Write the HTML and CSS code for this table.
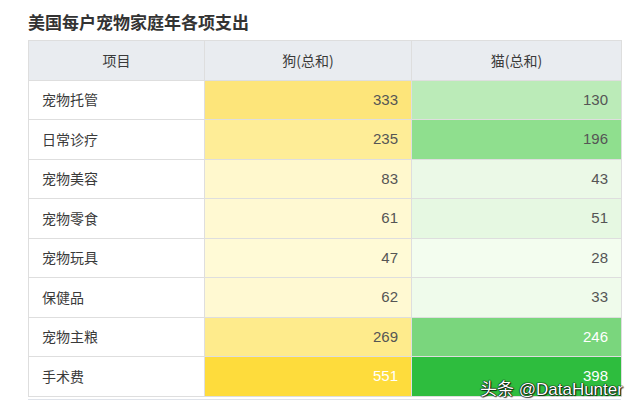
FILE: index.html
```html
<!DOCTYPE html>
<html lang="zh">
<head>
<meta charset="utf-8">
<link rel="stylesheet" href="styles.css">
</head>
<body>
<div class="page">
  <h1 class="title">美国每户宠物家庭年各项支出</h1>
  <div class="table-wrap">
    <table class="grid">
      <thead>
        <tr><th class="c1">项目</th><th class="c2">狗(总和)</th><th class="c3">猫(总和)</th></tr>
      </thead>
      <tbody>
        <tr><td class="name">宠物托管</td><td class="num" style="background:#fde57a">333</td><td class="num" style="background:#bbebb8">130</td></tr>
        <tr><td class="name">日常诊疗</td><td class="num" style="background:#feed97">235</td><td class="num" style="background:#8fdf8e">196</td></tr>
        <tr><td class="name">宠物美容</td><td class="num" style="background:#fff8cd">83</td><td class="num" style="background:#ebf9e7">43</td></tr>
        <tr><td class="name">宠物零食</td><td class="num" style="background:#fff9d2">61</td><td class="num" style="background:#e6f8e2">51</td></tr>
        <tr><td class="name">宠物玩具</td><td class="num" style="background:#fffad6">47</td><td class="num" style="background:#f3fdef">28</td></tr>
        <tr><td class="name">保健品</td><td class="num" style="background:#fff9d2">62</td><td class="num" style="background:#effbeb">33</td></tr>
        <tr><td class="name">宠物主粮</td><td class="num" style="background:#feeb8c">269</td><td class="num light" style="background:#7ad67d">246</td></tr>
        <tr><td class="name">手术费</td><td class="num light" style="background:#fedc3c">551</td><td class="num light" style="background:#2ebd3e">398</td></tr>
      </tbody>
    </table>
  </div>
  <div class="watermark">头条 @DataHunter</div>
</div>
</body>
</html>
```
FILE: styles.css
```css
html, body {
  margin: 0;
  padding: 0;
  background: #ffffff;
}
.page {
  position: relative;
  width: 640px;
  height: 411px;
  overflow: hidden;
  padding-left: 28px;
  box-sizing: border-box;
  font-family: "Liberation Sans", "Noto Sans CJK SC", sans-serif;
}
.title {
  margin: 0;
  padding-top: 12px;
  height: 28px;
  line-height: 20px;
  font-size: 17px;
  font-weight: bold;
  color: #333333;
  font-family: "Noto Sans CJK SC", sans-serif;
}
.table-wrap {
  width: 593px;
  border-bottom: 1px solid #dfe3ea;
  padding-bottom: 2px;
}
.grid {
  border-collapse: collapse;
  width: 593px;
  table-layout: fixed;
}
.grid th, .grid td {
  border: 1px solid #dedede;
  padding: 0 13px 1px;
  height: 39.5px;
  box-sizing: border-box;
}
.grid th {
  background: #e9ecf0;
  font-family: "Noto Sans CJK SC", sans-serif;
  font-weight: normal;
  font-size: 14px;
  color: #3a3a3a;
  text-align: center;
}
.c1 { width: 176px; }
.c2 { width: 207px; }
.c3 { width: 210px; }
.grid td.name {
  font-family: "Noto Sans CJK SC", sans-serif;
  font-size: 14px;
  color: #3a3a3a;
  text-align: left;
  background: #ffffff;
}
.grid td.num {
  font-family: "Liberation Sans", sans-serif;
  font-size: 15px;
  color: #555555;
  text-align: right;
}
.grid td.num.light {
  color: #ffffff;
}
.grid tr.last td.num {
  vertical-align: middle;
}
.watermark {
  position: absolute;
  left: 480px;
  top: 380px;
  font-size: 17px;
  line-height: 20px;
  color: #ffffff;
  font-family: "Liberation Sans", "Noto Sans CJK SC", sans-serif;
  text-shadow: 0 0 1px #000, 0 0 1px #000, 0 0 1px #000, 1px 1px 1px rgba(0,0,0,0.7);
  white-space: nowrap;
}
```
